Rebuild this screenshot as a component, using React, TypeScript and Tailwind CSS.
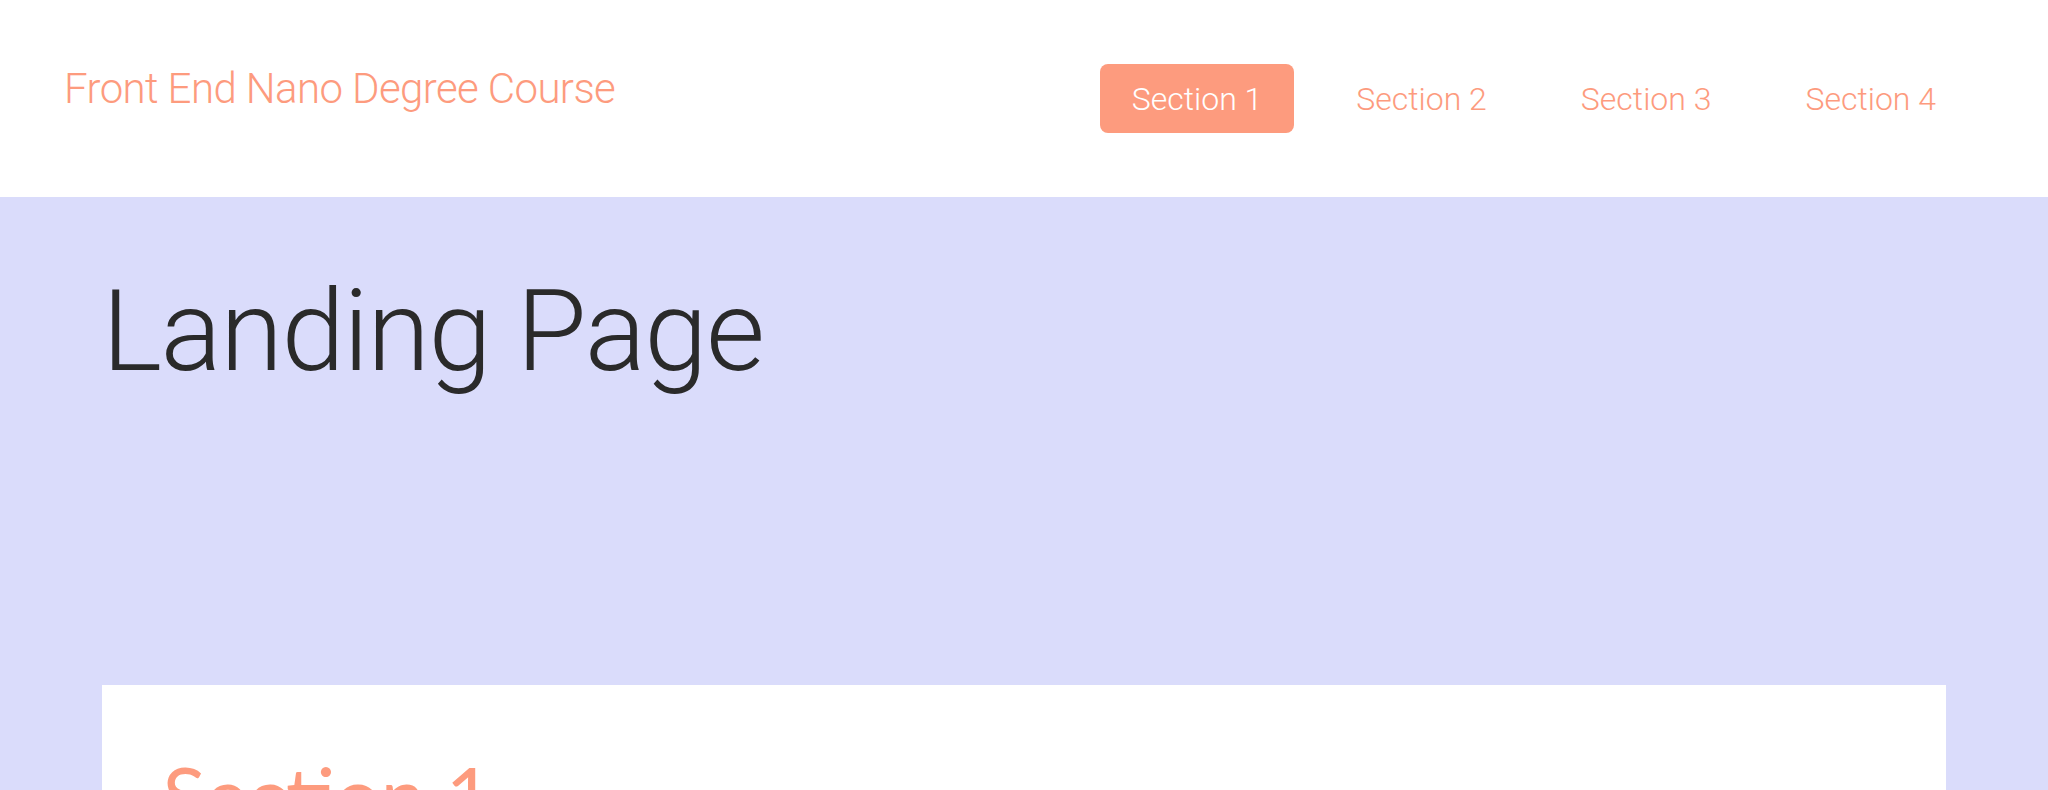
const navItems = ['Section 1', 'Section 2', 'Section 3', 'Section 4'];

export default function App() {
  return (
    <div className="min-h-screen bg-[#dadcfb] font-['Roboto',sans-serif]">
      {/* Header */}
      <header className="h-[197px] bg-white flex items-start justify-between pl-[64px] pr-[80px]">
        <h2 className="mt-[68px] text-[42px] leading-none font-light tracking-[-0.6px] text-[#fd9b7e]">
          Front End Nano Degree Course
        </h2>
        <nav>
          <ul className="flex gap-[30px] mt-[64px]">
            {navItems.map((item, i) => (
              <li
                key={item}
                className={`h-[69px] px-[32px] flex items-center rounded-lg text-[32px] leading-none font-light ${
                  i === 0 ? 'bg-[#fd9b7e] text-white' : 'text-[#fd9b7e]'
                }`}
              >
                {item}
              </li>
            ))}
          </ul>
        </nav>
      </header>

      {/* Main */}
      <main>
        <h1 className="pt-[77px] pl-[102px] text-[114px] leading-none font-light tracking-[-1.5px] text-[#2a2a2a]">
          Landing Page
        </h1>
        <section className="mx-[5%] mt-[297px] bg-white pt-[69px] pb-[40px] px-[60px]">
          <h2 className="font-['Lato',sans-serif] text-[80px] leading-none font-normal text-[#fd9b7e]">Section 1</h2>
        </section>
      </main>
    </div>
  );
}
